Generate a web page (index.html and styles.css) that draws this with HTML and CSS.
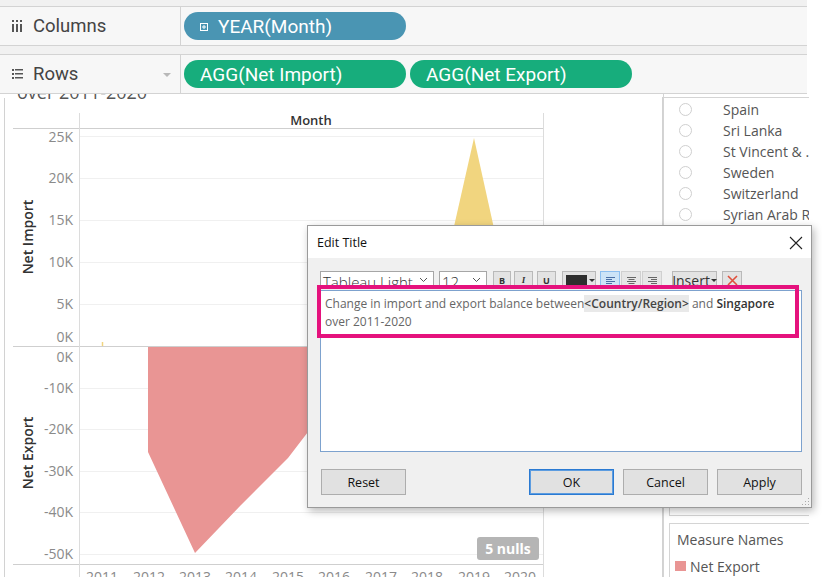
FILE: index.html
```html
<!DOCTYPE html>
<html>
<head>
<meta charset="utf-8">
<title>Edit Title</title>
<link rel="stylesheet" href="styles.css">
</head>
<body>
<div class="shelves">
  <div class="shelf">
    <div class="shelf-label">
      <svg class="shelf-ico" width="11" height="12" viewBox="0 0 11 12"><rect x="0" y="0" width="2" height="2"/><rect x="4" y="0" width="2" height="2"/><rect x="8" y="0" width="2" height="2"/><rect x="0" y="4" width="2" height="8"/><rect x="4" y="4" width="2" height="8"/><rect x="8" y="4" width="2" height="8"/></svg>
      <span>Columns</span>
    </div>
    <div class="shelf-pills">
      <div class="pill pill-blue"><svg class="pill-ico" width="8" height="8" viewBox="0 0 8 8"><rect x="0.5" y="0.5" width="7" height="7" fill="none" stroke="#fff"/><path d="M2 4H6M4 2V6" stroke="#fff"/></svg><span>YEAR(Month)</span></div>
    </div>
  </div>
  <div class="shelf">
    <div class="shelf-label">
      <svg class="shelf-ico" width="11" height="10" viewBox="0 0 11 10"><rect x="0" y="0" width="2" height="2"/><rect x="0" y="4" width="2" height="2"/><rect x="0" y="8" width="2" height="2"/><rect x="3" y="0" width="8" height="1.5"/><rect x="3" y="4" width="8" height="1.5"/><rect x="3" y="8" width="8" height="1.5"/></svg>
      <span>Rows</span>
      <span class="caret"></span>
    </div>
    <div class="shelf-pills">
      <div class="pill pill-green"><span>AGG(Net Import)</span></div>
      <div class="pill pill-green"><span>AGG(Net Export)</span></div>
    </div>
  </div>
</div>

<div class="main">
  <div class="viz">
    <svg width="663" height="483" viewBox="0 94 663 483">
      <rect x="0" y="94" width="663" height="483" fill="#fff"/>
      <text class="vtitle" x="17" y="99">over 2011-2020</text>
      <line class="frame" x1="4.5" y1="98" x2="4.5" y2="577"/>
      <line class="frame" x1="662.5" y1="97" x2="662.5" y2="577"/>
      <g class="grid">
        <line x1="79" y1="136.5" x2="543" y2="136.5"/>
        <line x1="79" y1="178.5" x2="543" y2="178.5"/>
        <line x1="79" y1="220.5" x2="543" y2="220.5"/>
        <line x1="79" y1="262.5" x2="543" y2="262.5"/>
        <line x1="79" y1="304.5" x2="543" y2="304.5"/>
        <line x1="79" y1="388.5" x2="543" y2="388.5"/>
        <line x1="79" y1="429.5" x2="543" y2="429.5"/>
        <line x1="79" y1="471.5" x2="543" y2="471.5"/>
        <line x1="79" y1="512.5" x2="543" y2="512.5"/>
        <line x1="79" y1="554.5" x2="543" y2="554.5"/>
      </g>
      <polygon class="neg" points="148,346 148,452 195,553 241,505 288,458 334,398 381,346"/>
      <polygon class="pos" points="427,346 474,138 520,346"/>
      <line x1="102.5" y1="342" x2="102.5" y2="346" stroke="#f1d47f" stroke-width="1.5"/>
      <g class="rule">
        <line x1="13" y1="128.5" x2="543" y2="128.5"/>
        <line x1="13" y1="346.5" x2="543" y2="346.5"/>
        <line x1="13" y1="564.5" x2="543" y2="564.5"/>
      </g>
      <g class="axis">
        <line x1="79.5" y1="113" x2="79.5" y2="577"/>
        <line x1="543.5" y1="113" x2="543.5" y2="577"/>
      </g>
      <text class="header" x="311" y="125">Month</text>
      <g class="tick">
        <text x="73" y="142">25K</text>
        <text x="73" y="183">20K</text>
        <text x="73" y="225">15K</text>
        <text x="73" y="267">10K</text>
        <text x="73" y="309">5K</text>
        <text x="73" y="342">0K</text>
        <text x="73" y="362">0K</text>
        <text x="73" y="393">-10K</text>
        <text x="73" y="434">-20K</text>
        <text x="73" y="476">-30K</text>
        <text x="73" y="517">-40K</text>
        <text x="73" y="559">-50K</text>
      </g>
      <g class="xtick">
        <text x="102" y="582">2011</text>
        <text x="149" y="582">2012</text>
        <text x="195" y="582">2013</text>
        <text x="241" y="582">2014</text>
        <text x="288" y="582">2015</text>
        <text x="334" y="582">2016</text>
        <text x="381" y="582">2017</text>
        <text x="427" y="582">2018</text>
        <text x="474" y="582">2019</text>
        <text x="520" y="582">2020</text>
      </g>
      <text class="atitle" transform="translate(33 237) rotate(-90)">Net Import</text>
      <text class="atitle" transform="translate(33 453) rotate(-90)">Net Export</text>
      <rect x="477" y="537" width="62" height="23" rx="3" fill="#b5b5b5"/>
      <text class="nulls" x="508" y="554">5 nulls</text>
    </svg>
  </div>
  <div class="side">
    <div class="card card-filter">
      <div class="opt"><span class="radio"></span><span>Spain</span></div>
      <div class="opt"><span class="radio"></span><span>Sri Lanka</span></div>
      <div class="opt"><span class="radio"></span><span>St Vincent &amp; ...</span></div>
      <div class="opt"><span class="radio"></span><span>Sweden</span></div>
      <div class="opt"><span class="radio"></span><span>Switzerland</span></div>
      <div class="opt"><span class="radio"></span><span>Syrian Arab Republic</span></div>
    </div>
    <div class="card card-mid"></div>
    <div class="card card-legend">
      <div class="legend-title">Measure Names</div>
      <div class="legend-item"><span class="swatch"></span><span>Net Export</span></div>
    </div>
  </div>
</div>

<div class="dialog">
  <div class="dlg-title">
    <span>Edit Title</span>
    <svg class="dlg-close" width="14" height="14" viewBox="0 0 14 14"><path d="M1 1L13 13M13 1L1 13" stroke="#222" stroke-width="1.1"/></svg>
  </div>
  <div class="dlg-body">
    <div class="toolbar">
      <div class="sel sel-font"><span>Tableau Light</span><svg class="chev" width="9" height="6" viewBox="0 0 9 6"><path d="M1 1L4.5 4.5L8 1" fill="none" stroke="#555"/></svg></div>
      <div class="sel sel-size"><span>12</span><svg class="chev" width="9" height="6" viewBox="0 0 9 6"><path d="M1 1L4.5 4.5L8 1" fill="none" stroke="#555"/></svg></div>
      <div class="tbtn tb-b">B</div>
      <div class="tbtn tb-i">I</div>
      <div class="tbtn tb-u">U</div>
      <div class="tbtn tb-color"><span class="chip"></span><span class="mini-caret"></span></div>
      <div class="align-group">
        <div class="abtn active"><svg width="9" height="9" viewBox="0 0 9 9"><path d="M0 1.5H9M0 3.5H6M0 5.5H9M0 7.5H6" stroke="#4a6fa5"/></svg></div>
        <div class="abtn"><svg width="9" height="9" viewBox="0 0 9 9"><path d="M0 1.5H9M1.5 3.5H7.5M0 5.5H9M1.5 7.5H7.5" stroke="#666"/></svg></div>
        <div class="abtn"><svg width="9" height="9" viewBox="0 0 9 9"><path d="M0 1.5H9M3 3.5H9M0 5.5H9M3 7.5H9" stroke="#666"/></svg></div>
      </div>
      <div class="tbtn tb-insert"><span>Insert</span><span class="mini-caret"></span></div>
      <div class="tbtn tb-x"><svg width="11" height="11" viewBox="0 0 11 11"><path d="M1 1L10 10M10 1L1 10" stroke="#e0503c" stroke-width="1.6"/></svg></div>
    </div>
    <div class="editor">
      <p>Change in import and export balance between<span class="field">&lt;Country/Region&gt;</span> and <b>Singapore</b></p>
      <p>over 2011-2020</p>
    </div>
    <div class="buttons">
      <button class="btn btn-reset">Reset</button>
      <div class="btn-right">
        <button class="btn btn-ok">OK</button>
        <button class="btn">Cancel</button>
        <button class="btn">Apply</button>
      </div>
    </div>
  </div>
  <div class="highlight"></div>
  <svg class="grip" width="8" height="8" viewBox="0 0 8 8"><g fill="#aaa"><rect x="6" y="0" width="1" height="1"/><rect x="3" y="3" width="1" height="1"/><rect x="6" y="3" width="1" height="1"/><rect x="0" y="6" width="1" height="1"/><rect x="3" y="6" width="1" height="1"/><rect x="6" y="6" width="1" height="1"/></g></svg>
</div>
</body>
</html>
```
FILE: styles.css
```css
* { box-sizing: border-box; margin: 0; padding: 0; }
html, body { width: 822px; height: 577px; overflow: hidden; background: #fff; }
body { font-family: "Open Sans", "Noto Sans", sans-serif; position: relative; }

/* shelves */
.shelves {
  width: 807px;
  background: #f1f1f1;
  padding-top: 6px;
  display: flex;
  flex-direction: column;
  gap: 8px;
}
.shelf {
  height: 40px;
  background: #f7f7f7;
  border-top: 1px solid #d3d3d3;
  border-bottom: 1px solid #d3d3d3;
  display: flex;
  align-items: center;
}
.shelf-label {
  width: 181px;
  height: 100%;
  border-right: 1px solid #d3d3d3;
  display: flex;
  align-items: center;
  padding-left: 12px;
  font-family: Roboto, "Liberation Sans", sans-serif;
  font-size: 18.5px;
  color: #444;
  position: relative;
}
.shelf-ico { fill: #555; margin-right: 10px; flex: none; }
.caret {
  position: absolute;
  left: 163px;
  top: 18px;
  border-left: 4px solid transparent;
  border-right: 4px solid transparent;
  border-top: 4px solid #b8b8b8;
}
.shelf-pills { display: flex; gap: 4px; padding-left: 3px; }
.pill {
  height: 28px;
  border-radius: 14px;
  color: #fff;
  font-family: Roboto, "Liberation Sans", sans-serif;
  font-size: 19px;
  display: flex;
  align-items: center;
  padding-left: 16px;
}
.pill-blue { width: 222px; background: #4a95b3; }
.pill-green { width: 222px; background: #17ad7c; }
.pill-ico { margin-right: 10px; margin-top: 1px; }

/* main */
.main { display: flex; height: 483px; }
.viz { width: 663px; height: 483px; overflow: hidden; }
.viz svg { display: block; }
.vtitle { font: 18px "Open Sans", sans-serif; fill: #555; }
.frame { stroke: #d2d2d2; stroke-width: 1; }
.grid line { stroke: #f0f0f0; stroke-width: 1; }
.rule line { stroke: #cfcfcf; stroke-width: 1; }
.axis line { stroke: #dcdcdc; stroke-width: 1; }
.neg { fill: #e99594; }
.pos { fill: #f1d57f; }
.header { font: 600 13px "Open Sans", sans-serif; fill: #333; text-anchor: middle; }
.tick text { font: 14px "Open Sans", sans-serif; fill: #8a8a8a; text-anchor: end; }
.xtick text { font: 14px "Open Sans", sans-serif; fill: #8a8a8a; text-anchor: middle; }
.atitle { font: 600 14px "Open Sans", sans-serif; fill: #333; text-anchor: middle; }
.nulls { font: 700 14px "Open Sans", sans-serif; fill: #fff; text-anchor: middle; }

/* side panel */
.side {
  flex: 1;
  border-left: 1px solid #d4d4d4;
  padding-top: 3px;
  display: flex;
  flex-direction: column;
}
.card { width: 145px; overflow: hidden; }
.card-filter {
  height: 133px;
  border-top: 1px solid #d4d4d4;
  border-bottom: 1px solid #d4d4d4;
  padding-top: 1px;
}
.opt {
  height: 21px;
  display: flex;
  align-items: center;
  font-size: 14px;
  color: #555;
  white-space: nowrap;
}
.radio {
  width: 13px;
  height: 13px;
  border: 1px solid #cfcfcf;
  border-radius: 50%;
  margin-left: 15px;
  margin-right: 31px;
  flex: none;
}
.card-mid {
  margin-left: 5px;
  width: 140px;
  height: 286px;
  border-left: 1px solid #d4d4d4;
  border-bottom: 1px solid #d4d4d4;
}
.card-legend {
  margin-top: 7px;
  margin-left: 5px;
  width: 140px;
  flex: 1;
  border-left: 1px solid #d4d4d4;
  border-top: 1px solid #d4d4d4;
  padding-top: 5px;
}
.legend-title { font-size: 14px; color: #555; line-height: 22px; padding-left: 7px; white-space: nowrap; }
.legend-item {
  display: flex;
  align-items: center;
  margin-top: 4px;
  height: 22px;
  font-size: 14px;
  color: #555;
  padding-left: 5px;
}
.swatch { width: 11px; height: 10px; background: #e99594; margin-right: 4px; }

/* dialog */
.dialog {
  position: absolute;
  left: 307px;
  top: 225px;
  width: 505px;
  height: 283px;
  background: #f0f0f0;
  border: 1px solid #9a9a9a;
  box-shadow: 2px 3px 8px rgba(0, 0, 0, 0.28);
  font-family: "Open Sans", "Noto Sans", sans-serif;
}
.dlg-title {
  height: 32px;
  background: #fff;
  display: flex;
  align-items: center;
  justify-content: space-between;
  padding: 0 8px 0 9px;
  font-size: 12.5px;
  color: #111;
}
.dlg-close { margin-top: 1px; }
.dlg-body { padding: 13px 9px 0 12px; }
.toolbar {
  height: 18px;
  display: flex;
  align-items: flex-start;
}
.sel {
  height: 18px;
  background: #fff;
  border: 1px solid #a6a6a6;
  display: flex;
  align-items: center;
  justify-content: space-between;
  padding: 0 5px 0 2px;
  font-size: 15px;
  font-weight: 300;
  color: #333;
  overflow: hidden;
  line-height: 18px;
}
.sel span { margin-top: 4px; }
.sel-font { width: 114px; }
.sel-size { width: 48px; margin-left: 5px; }
.chev { flex: none; }
.tbtn {
  height: 18px;
  background: #e3e3e3;
  border: 1px solid #b9b9b9;
  display: flex;
  align-items: center;
  justify-content: center;
  font-size: 9px;
  font-weight: 700;
  color: #333;
}
.tb-b { width: 18px; margin-left: 6px; }
.tb-i { width: 19px; margin-left: 3px; font-style: italic; font-family: "Liberation Serif", serif; }
.tb-u { width: 19px; margin-left: 4px; text-decoration: underline; }
.tb-color { width: 34px; margin-left: 6px; justify-content: flex-start; padding-left: 3px; }
.chip { width: 22px; height: 10px; background: #2e2e2e; margin-right: 2px; }
.mini-caret {
  border-left: 3px solid transparent;
  border-right: 3px solid transparent;
  border-top: 3px solid #333;
}
.align-group { display: flex; margin-left: 4px; gap: 1px; }
.abtn {
  width: 20px;
  height: 18px;
  background: #e6e6e6;
  border: 1px solid #d0d0d0;
  display: flex;
  align-items: center;
  justify-content: center;
}
.abtn.active { background: #cce4f7; border-color: #8cbff0; }
.tb-insert {
  width: 45px;
  margin-left: 10px;
  font-size: 14px;
  font-weight: 400;
  gap: 1px;
}
.tb-x { width: 20px; margin-left: 5px; }
.editor {
  margin-top: 1px;
  width: 482px;
  height: 162px;
  background: #fff;
  border: 1px solid #7da2ce;
  padding: 4px 0 0 4px;
  font-size: 12px;
  line-height: 18px;
  color: #666;
}
.editor b { font-weight: 600; color: #333; }
.field { background: #e9e9e9; font-weight: 600; color: #444; }
.buttons {
  margin-top: 17px;
  display: flex;
  justify-content: space-between;
  width: 482px;
  padding-left: 1px;
}
.btn-right { display: flex; gap: 9px; }
.btn {
  width: 85px;
  height: 26px;
  background: #e1e1e1;
  border: 1px solid #adadad;
  font-family: "Open Sans", "Noto Sans", sans-serif;
  font-size: 12.5px;
  color: #111;
}
.btn-ok { border: 1px solid #2a7ad2; box-shadow: inset 0 0 0 1px #5c9ce0; }
.highlight {
  position: absolute;
  left: 9px;
  top: 59px;
  width: 482px;
  height: 53px;
  border: 4px solid #e5127d;
}
.grip { position: absolute; right: 1px; bottom: 1px; }
```
